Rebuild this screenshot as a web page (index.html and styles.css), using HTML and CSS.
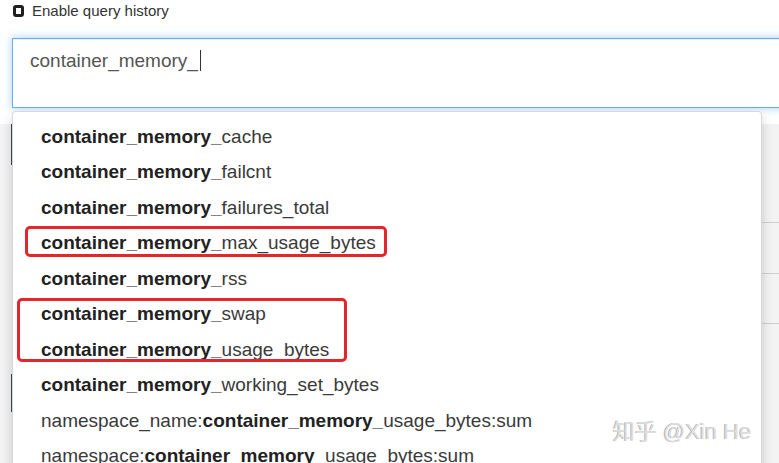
FILE: index.html
```html
<!DOCTYPE html>
<html lang="en">
<head>
<meta charset="utf-8">
<title>Query</title>
<link rel="stylesheet" href="styles.css">
</head>
<body>
<div class="page">
  <label class="history"><span class="check"></span><span class="history-text">Enable query history</span></label>
  <div class="editor"><span class="query">container_memory_</span><span class="caret"></span></div>
  <div class="behind">
    <div class="bar bar-top"></div>
    <div class="row row-a"></div>
    <div class="row row-b"></div>
    <div class="row row-c"></div>
    <div class="bar bar-bottom"></div>
  </div>
  <ul class="dropdown">
    <li><b>container_memory_</b>cache</li>
    <li><b>container_memory_</b>failcnt</li>
    <li><b>container_memory_</b>failures_total</li>
    <li><b>container_memory_</b>max_usage_bytes</li>
    <li><b>container_memory_</b>rss</li>
    <li><b>container_memory_</b>swap</li>
    <li><b>container_memory_</b>usage_bytes</li>
    <li><b>container_memory_</b>working_set_bytes</li>
    <li>namespace_name:<b>container_memory_</b>usage_bytes:sum</li>
    <li>namespace:<b>container_memory_</b>usage_bytes:sum</li>
  </ul>
  <div class="mark mark-one"></div>
  <div class="mark mark-two"></div>
  <div class="watermark">知乎 @Xin He</div>
</div>
</body>
</html>
```
FILE: styles.css
```css
html, body {
  margin: 0;
  padding: 0;
  background: #fff;
}
.page {
  position: relative;
  width: 779px;
  height: 463px;
  overflow: hidden;
  padding-left: 12px;
  box-sizing: border-box;
  font-family: "Liberation Sans", Arial, sans-serif;
  color: #333;
}
.history {
  display: flex;
  align-items: center;
  height: 21px;
  font-size: 15px;
  color: #333;
}
.check {
  width: 11px;
  height: 12px;
  box-sizing: border-box;
  border: 3px solid #1f1f1f;
  border-radius: 3px;
  margin-left: 1px;
  margin-right: 8px;
}
.editor {
  position: relative;
  z-index: 1;
  margin-top: 17px;
  margin-right: -40px;
  height: 70px;
  box-sizing: border-box;
  border: 1px solid #66afe9;
  background: #fff;
  box-shadow: inset 0 1px 1px rgba(0,0,0,.075), 0 0 8px rgba(102,175,233,.6);
  padding: 10px 0 0 17px;
  font-size: 19px;
  line-height: 24px;
  color: #555;
  display: flex;
  align-items: flex-start;
}
.caret {
  display: inline-block;
  width: 1px;
  height: 21px;
  margin-top: 1px;
  margin-left: 2px;
  background: #333;
}
.behind {
  margin-left: -12px;
  margin-top: 3px;
  padding-left: 11px;
  height: 352px;
  background: #f3f3f3;
}
.bar {
  border-left: 1px solid #3b4956;
}
.bar-top {
  margin-top: 16px;
  height: 41px;
}
.bar-bottom {
  margin-top: 50px;
  height: 38px;
}
.row {
  margin-left: 1px;
  box-sizing: border-box;
  border-bottom: 1px solid #cfcfcf;
}
.row-a { height: 58px; }
.row-b { height: 51px; }
.row-c { height: 50px; }
.dropdown {
  position: absolute;
  z-index: 2;
  top: 111px;
  left: 12px;
  width: 750px;
  height: 380px;
  margin: 0;
  padding: 6.5px 0 0;
  list-style: none;
  box-sizing: border-box;
  background: #fff;
  border: 1px solid rgba(0,0,0,.15);
  border-radius: 4px;
  box-shadow: 0 6px 12px rgba(0,0,0,.175);
}
.dropdown li {
  padding-left: 28px;
  height: 35.5px;
  line-height: 35.5px;
  font-size: 19px;
  color: #3a3a3a;
  white-space: nowrap;
}
.dropdown b {
  color: #222;
  font-weight: bold;
}
.mark {
  position: absolute;
  z-index: 3;
  box-sizing: border-box;
  border: 3px solid #e3262b;
  border-radius: 5px;
}
.mark-one {
  left: 25px;
  top: 226px;
  width: 362px;
  height: 31px;
}
.mark-two {
  left: 17px;
  top: 298px;
  width: 330px;
  height: 64px;
}
.watermark {
  position: absolute;
  z-index: 3;
  left: 613px;
  top: 418px;
  font-family: "Liberation Sans", "Noto Sans CJK SC", sans-serif;
  font-size: 22px;
  line-height: 28px;
  color: #dedede;
  text-shadow: -1px 0 0 #b4b4b4;
  white-space: nowrap;
}
```
